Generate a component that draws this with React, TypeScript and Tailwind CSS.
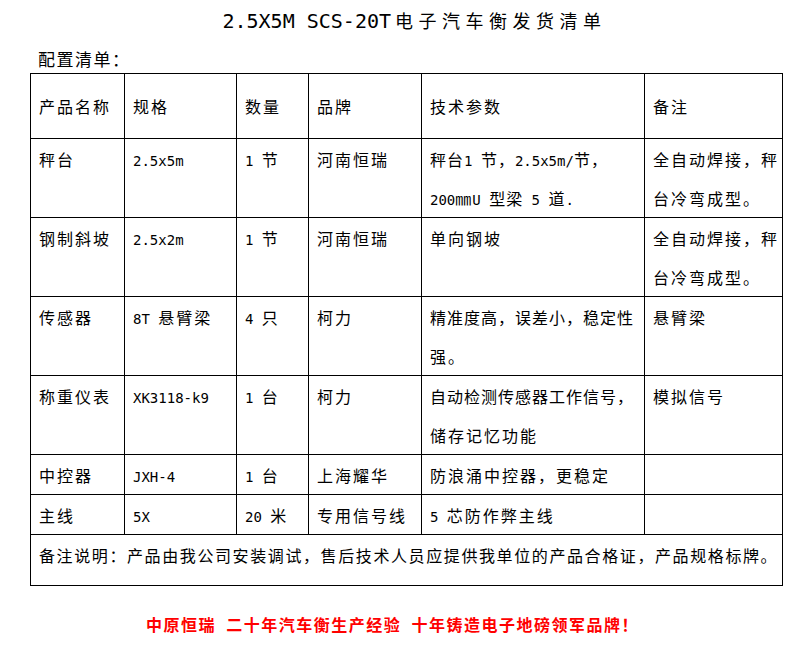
import React from "react";

const latin = /^[\x00-\xff]+$/;

// latin runs are set in a narrow mono face, CJK runs in Noto
const Txt = ({ s }: { s: string }) => (
  <>
    {s
      .split(/([\x00-\xff]+)/)
      .filter(Boolean)
      .map((p, i) =>
        latin.test(p) ? (
          <span
            key={i}
            className="font-['DejaVu_Sans_Mono',monospace] text-[14px] tracking-normal"
          >
            {p}
          </span>
        ) : (
          <span key={i}>{p}</span>
        ),
      )}
  </>
);

type Row = { h: string; cells: string[][] };

const rows: Row[] = [
  {
    h: "h-[79px]",
    cells: [
      ["秤台"],
      ["2.5x5m"],
      ["1 节"],
      ["河南恒瑞"],
      ["秤台1 节，2.5x5m/节，", "200㎜U 型梁 5 道."],
      ["全自动焊接，秤", "台冷弯成型。"],
    ],
  },
  {
    h: "h-[79px]",
    cells: [
      ["钢制斜坡"],
      ["2.5x2m"],
      ["1 节"],
      ["河南恒瑞"],
      ["单向钢坡"],
      ["全自动焊接，秤", "台冷弯成型。"],
    ],
  },
  {
    h: "h-[78px]",
    cells: [
      ["传感器"],
      ["8T 悬臂梁"],
      ["4 只"],
      ["柯力"],
      ["精准度高，误差小，稳定性", "强。"],
      ["悬臂梁"],
    ],
  },
  {
    h: "h-[79px]",
    cells: [
      ["称重仪表"],
      ["XK3118-k9"],
      ["1 台"],
      ["柯力"],
      ["自动检测传感器工作信号，", "储存记忆功能"],
      ["模拟信号"],
    ],
  },
  {
    h: "h-[40px]",
    cells: [["中控器"], ["JXH-4"], ["1 台"], ["上海耀华"], ["防浪涌中控器，更稳定"], [""]],
  },
  {
    h: "h-[40px]",
    cells: [["主线"], ["5X"], ["20 米"], ["专用信号线"], ["5 芯防作弊主线"], [""]],
  },
];

const headers = ["产品名称", "规格", "数量", "品牌", "技术参数", "备注"];
const widths = ["w-[94px]", "w-[112px]", "w-[72px]", "w-[113px]", "w-[223px]", "w-[138px]"];

export default function App() {
  return (
    <div className="w-[810px] h-[654px] bg-white text-black font-['Noto_Sans_CJK_SC',sans-serif] overflow-hidden">
      <div className="h-[40px] leading-[40px] pl-[19px] text-center whitespace-nowrap">
        <span className="font-['DejaVu_Sans_Mono',monospace] text-[20px]">2.5X5M SCS-20T</span>
        <span className="ml-[4px] text-[18px] tracking-[5.5px]">电子汽车衡发货清单</span>
      </div>

      <div className="pt-[5px] h-[33px] leading-[28px] pl-[38px] text-[17px] tracking-[1.5px]">
        配置清单：
      </div>

      <table className="ml-[30px] w-[752px] table-fixed border-collapse text-[16px] tracking-[2px]">
        <colgroup>
          {widths.map((w, i) => (
            <col key={i} className={w} />
          ))}
        </colgroup>
        <tbody>
          <tr className="h-[65px]">
            {headers.map((h) => (
              <td key={h} className="border border-black pl-[8px] py-0 align-middle whitespace-nowrap">
                {h}
              </td>
            ))}
          </tr>
          {rows.map((r, ri) => (
            <tr key={ri} className={r.h}>
              {r.cells.map((lines, ci) => (
                <td
                  key={ci}
                  className="border border-black pl-[8px] py-0 align-top whitespace-nowrap"
                >
                  {lines.map((l, li) => (
                    <div
                      key={li}
                      className={
                        l.length > 11
                          ? "h-[39px] leading-[41px] tracking-[1px]"
                          : "h-[39px] leading-[41px]"
                      }
                    >
                      <Txt s={l} />
                    </div>
                  ))}
                </td>
              ))}
            </tr>
          ))}
          <tr className="h-[51px]">
            <td
              colSpan={6}
              className="border border-black pl-[8px] py-0 align-top whitespace-nowrap tracking-[1.6px]"
            >
              <div className="h-[39px] leading-[41px]">
                备注说明：产品由我公司安装调试，售后技术人员应提供我单位的产品合格证，产品规格标牌。
              </div>
            </td>
          </tr>
        </tbody>
      </table>

      <div className="mt-[24px] h-[28px] leading-[28px] pl-[146px] whitespace-pre text-[16px] font-bold tracking-[1.5px] text-[#ff0000]">
        中原恒瑞  二十年汽车衡生产经验  十年铸造电子地磅领军品牌！
      </div>
    </div>
  );
}
